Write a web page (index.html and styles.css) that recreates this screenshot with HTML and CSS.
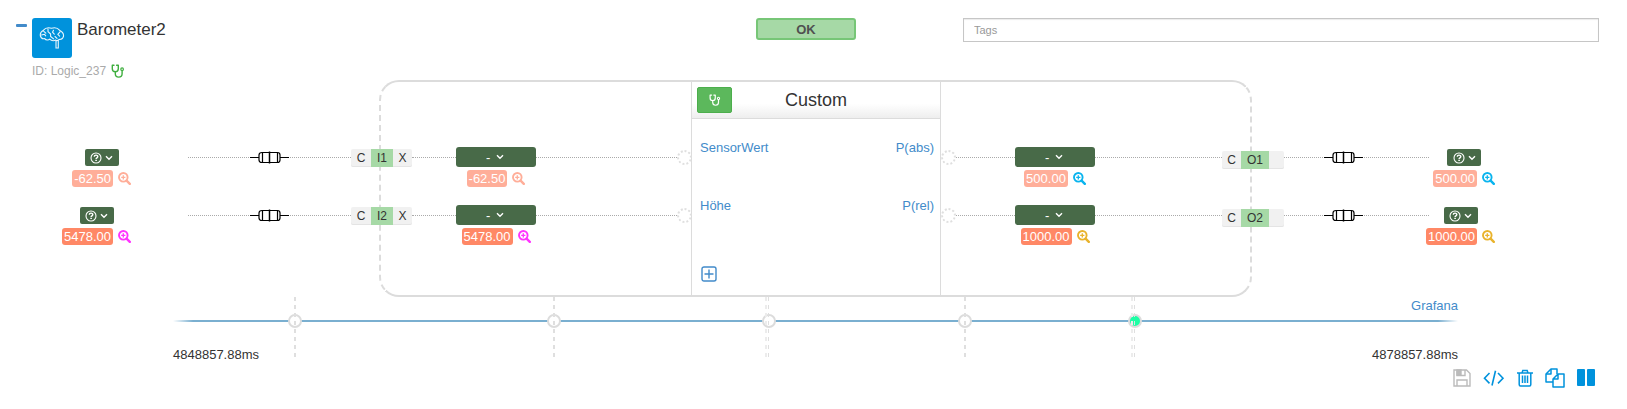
FILE: index.html
```
<!DOCTYPE html>
<html lang="en">
<head>
<meta charset="utf-8">
<title>Barometer2</title>
<link rel="stylesheet" href="styles.css">
</head>
<body>
<svg class="defs" aria-hidden="true">
  <symbol id="stethoscope" viewBox="0 0 14 14"><path d="M3 1.2H1.3v3.6a3 3 0 0 0 6 0V1.2H5.6M4.3 7.8v1.9a3.4 3.4 0 0 0 6.8 0V6.6" fill="none" stroke="currentColor" stroke-width="1.4" stroke-linecap="round" stroke-linejoin="round"/><circle cx="11.1" cy="5.2" r="1.3" fill="none" stroke="currentColor" stroke-width="1.2"/></symbol>
  <symbol id="zoom-in" viewBox="0 0 13 13"><path d="M8.6 8.6l3.2 3.2" stroke="currentColor" stroke-width="2.4" stroke-linecap="round"/><circle cx="5.3" cy="5.3" r="4.3" fill="none" stroke="currentColor" stroke-width="1.9"/><path d="M5.3 3.2v4.2M3.2 5.3h4.2" stroke="currentColor" stroke-width="1.3"/></symbol>
  <symbol id="question" viewBox="0 0 12 12"><circle cx="6" cy="6" r="5" fill="none" stroke="currentColor" stroke-width="1.1"/><path d="M4.3 4.8c0-2.2 3.5-2.1 3.5-.2 0 1.2-1.7 1.2-1.7 2.3" fill="none" stroke="currentColor" stroke-width="1.4"/><path d="M5.3 7.8h1.6v1.3H5.3z" fill="currentColor"/></symbol>
  <symbol id="chevron" viewBox="0 0 8 6"><path d="M1 1.2l3 3 3-3" fill="none" stroke="currentColor" stroke-width="1.4"/></symbol>
  <symbol id="resistor" viewBox="0 0 39 13"><path d="M0 6.5h9M30 6.5h9" stroke="#000" stroke-width="1.2"/><path d="M12 1.5h15.500c2 0 2.500 1 2.500 2.500v5c0 1.500-.5 2.500-2.500 2.500H12C10 11.500 9 10.500 9 9V4c0-1.500 1-2.500 3-2.500z" fill="#fff" stroke="#000" stroke-width="1.200"/><path d="M12.500 1.500v10M27.500 1.500v10" stroke="#000" stroke-width="1.200"/><path d="M19.500 .5v12" stroke="#000" stroke-width="1.500"/></symbol>
</svg>

<header class="header">
  <div class="identity">
    <button class="collapse" type="button" aria-label="Collapse"></button>
    <div class="logo">
      <svg width="26" height="22" viewBox="0 0 26 22" fill="none" stroke="#e8f5fc" stroke-width="1.100" stroke-linecap="round" stroke-linejoin="round"><path d="M12.500 1.200C9 .3 6 1.200 4.500 3.200 2 4.500 1 7 1.400 9c.6 2.200 2.300 3 4.300 2.600 1.200 1.800 4 1.600 5 .5 1.500 1.600 4 1.900 6 1M12.500 1.200c3-.8 6.500 0 8 2 2.500 1.300 4.300 3.600 4 6-.4 2.200-2.300 3.400-4.300 3.200-1 1.300-2.600 1.300-3.500 1.100M17 13.500v7.300M19.300 13.600v7.200M16.900 21h2.500M9 2v2.600l2.600 2.400v2.500l3 2.400M4.800 4.300l2 1.900M2.500 8l3-.7 1.200 1.500M14.500 3.200l-1 2 1.800 2M21 4.800l-2.200 2.500 1.800 1.800M16 9.500l2 1.800"/></svg>
    </div>
    <h1 class="title">Barometer2</h1>
    <div class="ident">ID: Logic_237 <svg class="ident-icon" width="14" height="14"><use href="#stethoscope"/></svg></div>
  </div>
  <div><button class="status" type="button">OK</button></div>
  <input class="tags" type="text" placeholder="Tags" aria-label="Tags">
</header>

<main>
<section class="board">
  <div class="frame"></div>

  <article class="block">
    <header class="block-head">
      <button class="diagnose" type="button" aria-label="Diagnose"><svg width="12" height="12"><use href="#stethoscope"/></svg></button>
      <h2 class="block-title">Custom</h2>
    </header>
    <div class="ports"><a href="#">SensorWert</a><a href="#">P(abs)</a></div>
    <div class="ports"><a href="#">Höhe</a><a href="#">P(rel)</a></div>
    <button class="add" type="button" aria-label="Add port"><svg width="16" height="16" viewBox="0 0 16 16" fill="none" stroke="currentColor" stroke-width="1.400"><rect x="1" y="1" width="14" height="14" rx="2"/><path d="M8 3.500v9M3.500 8h9"/></svg></button>
  </article>

  <div class="lane lane-first">
    <div class="endpoint"><button class="source" type="button" aria-label="Source I1"><svg width="12" height="12"><use href="#question"/></svg><svg width="8" height="6"><use href="#chevron"/></svg></button><div class="reading"><span class="value pale">-62.50</span><svg class="peach" width="13" height="13"><use href="#zoom-in"/></svg></div></div>
    <div class="wire source-wire"><svg class="resistor" width="39" height="13"><use href="#resistor"/></svg></div>
    <div class="badge"><button type="button">C</button><button class="name" type="button">I1</button><button type="button">X</button></div>
    <div class="wire"></div>
    <div class="stage"><select aria-label="Filter I1"><option>-</option></select><div class="reading"><span class="value pale">-62.50</span><svg class="peach" width="13" height="13"><use href="#zoom-in"/></svg></div></div>
    <div class="wire"></div>
    <div class="pin"></div>
    <div class="pin pin-out"></div>
    <div class="wire"></div>
    <div class="stage"><select aria-label="Filter O1"><option>-</option></select><div class="reading"><span class="value pale">500.00</span><svg class="cyan" width="13" height="13"><use href="#zoom-in"/></svg></div></div>
    <div class="wire"></div>
    <div class="badge badge-out"><button type="button">C</button><button class="name" type="button">O1</button><span class="blank"></span></div>
    <div class="wire target-wire"><svg class="resistor" width="39" height="13"><use href="#resistor"/></svg></div>
    <div class="endpoint"><button class="source" type="button" aria-label="Target O1"><svg width="12" height="12"><use href="#question"/></svg><svg width="8" height="6"><use href="#chevron"/></svg></button><div class="reading"><span class="value pale">500.00</span><svg class="cyan" width="13" height="13"><use href="#zoom-in"/></svg></div></div>
  </div>

  <div class="lane lane-second">
    <div class="endpoint"><button class="source" type="button" aria-label="Source I2"><svg width="12" height="12"><use href="#question"/></svg><svg width="8" height="6"><use href="#chevron"/></svg></button><div class="reading"><span class="value">5478.00</span><svg class="magenta" width="13" height="13"><use href="#zoom-in"/></svg></div></div>
    <div class="wire source-wire"><svg class="resistor" width="39" height="13"><use href="#resistor"/></svg></div>
    <div class="badge"><button type="button">C</button><button class="name" type="button">I2</button><button type="button">X</button></div>
    <div class="wire"></div>
    <div class="stage"><select aria-label="Filter I2"><option>-</option></select><div class="reading"><span class="value">5478.00</span><svg class="magenta" width="13" height="13"><use href="#zoom-in"/></svg></div></div>
    <div class="wire"></div>
    <div class="pin"></div>
    <div class="pin pin-out"></div>
    <div class="wire"></div>
    <div class="stage"><select aria-label="Filter O2"><option>-</option></select><div class="reading"><span class="value">1000.00</span><svg class="amber" width="13" height="13"><use href="#zoom-in"/></svg></div></div>
    <div class="wire"></div>
    <div class="badge badge-out"><button type="button">C</button><button class="name" type="button">O2</button><span class="blank"></span></div>
    <div class="wire target-wire"><svg class="resistor" width="39" height="13"><use href="#resistor"/></svg></div>
    <div class="endpoint"><button class="source" type="button" aria-label="Target O2"><svg width="12" height="12"><use href="#question"/></svg><svg width="8" height="6"><use href="#chevron"/></svg></button><div class="reading"><span class="value">1000.00</span><svg class="amber" width="13" height="13"><use href="#zoom-in"/></svg></div></div>
  </div>
</section>

<section class="timeline">
  <a class="grafana" href="#">Grafana</a>
  <div class="rail"></div>
  <div class="range"><span>4848857.88ms</span><span>4878857.88ms</span></div>
  <div class="marker" style="left:9.5%"></div>
  <div class="marker" style="left:29.65%"></div>
  <div class="marker twin" style="left:46.35%"></div>
  <div class="marker" style="left:61.65%"></div>
  <div class="marker twin active" style="left:74.85%"></div>
</section>
</main>

<footer class="toolbar">
  <button type="button" aria-label="Save" disabled><svg width="18" height="18" viewBox="0 0 18 18" fill="none" stroke="currentColor" stroke-width="1.400"><path d="M1 1h12.500L17 4.500V17H1z"/><path d="M4 17v-6h10v6"/><path d="M4 1v5.500h8V1"/><path d="M4 1h4v5H4z" fill="currentColor"/></svg></button>
  <button type="button" aria-label="Code"><svg width="22" height="18" viewBox="0 0 22 18" fill="none" stroke="currentColor" stroke-width="1.600"><path d="M6.500 4L1.500 9.200l5 5.200M15 4l5 5.200-5 5.200M12.500 1.800L9 16.500"/></svg></button>
  <button type="button" aria-label="Delete"><svg width="16" height="18" viewBox="0 0 16 18" fill="none" stroke="currentColor" stroke-width="1.500"><path d="M0 4h16M5 4l.8-2.500h4.400L11 4M2.200 4v11.500c0 1 .5 1.500 1.300 1.500h9c.8 0 1.300-.5 1.300-1.500V4M5.500 6.500v7.500M8 6.500v7.500M10.500 6.500v7.500"/></svg></button>
  <button type="button" aria-label="Copy"><svg width="20" height="20" viewBox="0 0 20 20" fill="none" stroke="currentColor" stroke-width="1.500" stroke-linejoin="round"><path d="M8 14H1V6l5-5h6v5"/><path d="M6 1v5H1M13 6h6v13H8v-8zM13 6v5H8"/></svg></button>
  <button type="button" aria-label="Pause"><svg width="18" height="18" viewBox="0 0 18 18" fill="currentColor"><rect width="8" height="17" rx="1"/><rect x="10" width="8" height="17" rx="1"/></svg></button>
</footer>
</body>
</html>
```
FILE: styles.css
```
*, *::before, *::after { box-sizing: border-box; }
body {
  margin: 0;
  background: #fff;
  color: #333;
  font: 13px/18px "Liberation Sans", Arial, sans-serif;
}
button, input, select { font-family: inherit; font-size: inherit; color: inherit; margin: 0; }
button { padding: 0; border: 0; background: none; cursor: pointer; }
svg { display: block; flex: none; }
a { color: #428bca; text-decoration: none; }
.defs { position: absolute; width: 0; height: 0; }

.header {
  display: grid;
  grid-template-columns: 740fr 207fr 636fr;
  align-items: start;
  padding: 18px 28px 0 16px;
}
.identity {
  display: grid;
  grid-template-columns: 11px 40px 1fr;
  grid-template-rows: 40px 22px;
  column-gap: 5px;
}
.collapse { height: 3px; margin-top: 6px; background: #428bca; border-radius: 1px; }
.logo {
  display: grid;
  place-items: center;
  border-radius: 3px;
  background: #0092dc;
}
.title { margin: 0; font-size: 17px; line-height: 24px; font-weight: 400; }
.ident {
  grid-column: 2 / 4;
  display: flex;
  align-items: center;
  gap: 5px;
  padding-top: 4px;
  font-size: 12px;
  line-height: 18px;
  color: #aaa;
}
.ident-icon { color: #3eae3e; }
.status {
  width: 100px;
  height: 22px;
  border: 2px solid #77c677;
  border-radius: 3px;
  background: #a6d9a6;
  color: #505050;
  font-weight: 700;
}
.tags {
  width: 100%;
  height: 24px;
  padding: 0 10px;
  border: 1px solid #c6c6c6;
  box-shadow: inset 0 1px 1px rgba(0, 0, 0, .08);
  font-size: 11px;
}
.tags::placeholder { color: #999; opacity: 1; }

.board {
  display: grid;
  grid-template-columns:
    131fr 57fr 163fr 61px 44fr 80px 141fr 14px 250px 15px 59fr 80px 127fr 62px 145fr minmax(0, 66fr) 132fr;
  grid-template-rows: 67px 58px 58px 34px;
}
.lane { grid-column: 1 / -1; display: grid; grid-template-columns: subgrid; align-items: start; }
.lane-first { grid-row: 2; }
.lane-second { grid-row: 3; }
.frame {
  grid-area: 1 / 4 / 5 / 15;
  margin: 0 32px 0 28px;
  border: 2px solid #dcdcdc;
  border-left-style: dashed;
  border-right-style: dashed;
  border-radius: 20px;
}
.block {
  grid-area: 1 / 9 / 5 / 10;
  display: grid;
  grid-template-rows: 37px 58px 58px 1fr;
  margin: 2px 0;
  border: solid #dcdcdc;
  border-width: 0 1px;
}
.block-head {
  display: grid;
  grid-template-columns: 35px 1fr 35px;
  align-items: center;
  padding: 0 5px;
  border-bottom: 1px solid #dcdcdc;
  background: linear-gradient(#fff 60%, #eee);
}
.diagnose {
  display: grid;
  place-items: center;
  height: 26px;
  border: 1px solid #4cae4c;
  border-radius: 2px;
  background: #5cb85c;
  color: #fff;
}
.block-title { margin: 0; font-size: 18px; line-height: 24px; font-weight: 400; text-align: center; }
.ports { display: flex; justify-content: space-between; padding: 20px 6px 0 8px; }
.add { justify-self: start; align-self: start; margin: 31px 0 0 9px; color: #428bca; }

.endpoint { display: flex; flex-direction: column; align-items: center; justify-self: end; gap: 4px; padding-top: 2px; }
.stage { display: flex; flex-direction: column; align-items: center; gap: 3px; }
.source {
  display: flex;
  align-items: center;
  justify-content: center;
  gap: 3px;
  width: 34px;
  height: 17px;
  border-radius: 2px;
  background: #486a48;
  color: #fff;
}
.stage select {
  appearance: none;
  width: 80px;
  height: 20px;
  padding: 0 28px 0 30px;
  border: 0;
  border-radius: 3px;
  color: #fff;
  background: #486a48 url("data:image/svg+xml,%3Csvg xmlns='http://www.w3.org/2000/svg' width='8' height='6'%3E%3Cpath d='M1 1.200l3 3 3-3' fill='none' stroke='white' stroke-width='1.400'/%3E%3C/svg%3E") 40px 7px no-repeat;
}
.reading { display: flex; align-items: center; gap: 5px; }
.value { padding: 0 2px; border-radius: 3px; background: #ff8866; color: #fff; line-height: 17px; }
.pale { background: #ffae99; }
.peach { color: #ffae99; }
.magenta { color: #ff33ff; }
.cyan { color: #0ab4ee; }
.amber { color: #e9b32c; }

.wire { height: 1px; margin-top: 10px; border-top: 1px dotted #aaa; }
.source-wire { grid-column: 3; display: flex; justify-content: center; }
.target-wire { display: flex; padding-left: 40px; }
.resistor { margin-top: -7px; background: linear-gradient(#fff, #fff); }
.pin { height: 15px; margin-top: 3px; width: 15px; border: 2px dotted #dfdfdf; border-radius: 50%; }
.pin-out { grid-column: 10; }

.badge {
  display: grid;
  grid-template-columns: 20px 22px 19px;
  height: 18px;
  margin-top: 2px;
  border-radius: 2px;
  background: #f1f1f1;
  box-shadow: inset 0 -1px #e4e4e4;
  font-size: 12px;
}
.badge-out { grid-template-columns: 19px 28px 15px; margin-top: 4px; }
.name { background: #a6d9a6; }

.timeline { position: relative; margin: 0 169px 0 173px; }
.grafana { display: block; text-align: right; }
.rail {
  height: 2px;
  margin-top: 5px;
  background: linear-gradient(90deg, transparent, #7aafd0 20px, #7aafd0 calc(100% - 20px), transparent);
}
.range { display: flex; justify-content: space-between; padding-top: 24px; }
.marker { position: absolute; top: 0; width: 2px; height: 60px; margin-left: -1px; }
.marker::before {
  content: "";
  position: absolute;
  left: -6px;
  top: 17px;
  width: 14px;
  height: 14px;
  border: 2px solid #dcdcdc;
  border-radius: 50%;
  background: #fff;
}
.marker::after {
  content: "";
  position: absolute;
  inset: 0;
  background: repeating-linear-gradient(#dfdfdf 0 4px, transparent 4px 8px);
}
.twin::after {
  left: -3px;
  right: 1px;
  background:
    repeating-linear-gradient(#dfdfdf 0 4px, transparent 4px 8px) 3px 0 / 1px 60px no-repeat,
    repeating-linear-gradient(#ececec 0 4px, transparent 4px 8px) 0 0 / 2px 60px no-repeat;
}
.active::before { background: #1dffa5; }

.toolbar { display: flex; align-items: center; justify-content: flex-end; gap: 12px; height: 22px; margin: 3px 32px 0; color: #0092dc; }
.toolbar button:disabled { color: #bbb; }
```
